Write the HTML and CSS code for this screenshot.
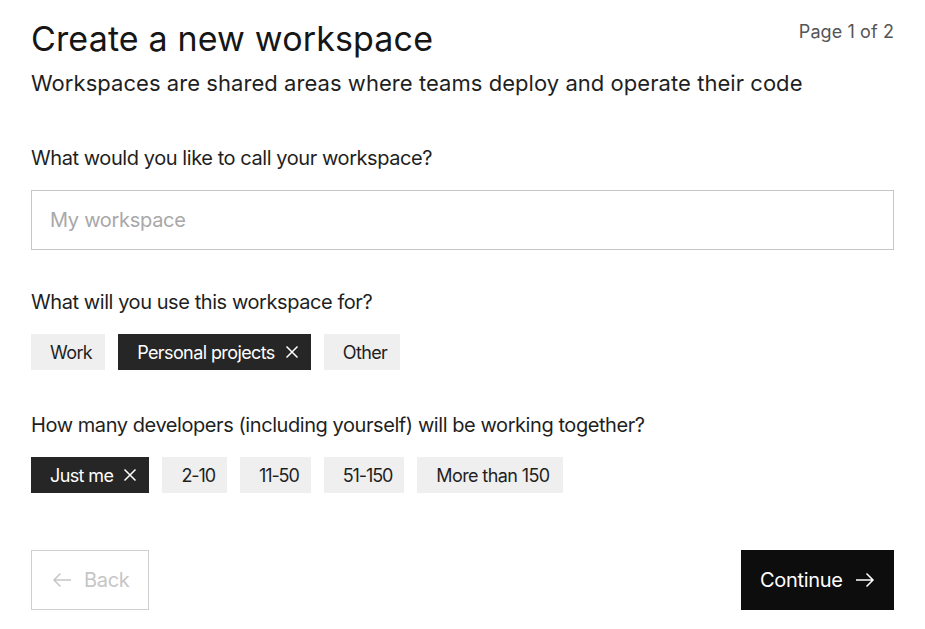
FILE: index.html
```html
<!DOCTYPE html>
<html>
<head>
<meta charset="utf-8">
<link rel="stylesheet" href="styles.css">
</head>
<body>
<main class="page">
  <header class="head">
    <div class="head-text">
      <h1 class="title">Create a new workspace</h1>
      <p class="subtitle">Workspaces are shared areas where teams deploy and operate their code</p>
    </div>
    <div class="pager">Page 1 of 2</div>
  </header>

  <section class="field field-name">
    <label class="label" for="ws">What would you like to call your workspace?</label>
    <input id="ws" class="input" type="text" placeholder="My workspace">
  </section>

  <section class="field field-use">
    <div class="label">What will you use this workspace for?</div>
    <div class="chips">
      <span class="chip">Work</span>
      <span class="chip chip-on">Personal projects <svg class="x" viewBox="0 0 14 14" width="14" height="14"><path d="M1.5 1.5 L12.5 12.5 M12.5 1.5 L1.5 12.5" stroke="currentColor" stroke-width="1.5" fill="none"/></svg></span>
      <span class="chip">Other</span>
    </div>
  </section>

  <section class="field field-team">
    <div class="label">How many developers (including yourself) will be working together?</div>
    <div class="chips">
      <span class="chip chip-on">Just me <svg class="x" viewBox="0 0 14 14" width="14" height="14"><path d="M1.5 1.5 L12.5 12.5 M12.5 1.5 L1.5 12.5" stroke="currentColor" stroke-width="1.5" fill="none"/></svg></span>
      <span class="chip chip-num">2-10</span>
      <span class="chip chip-num">11-50</span>
      <span class="chip chip-num">51-150</span>
      <span class="chip">More than 150</span>
    </div>
  </section>

  <footer class="actions">
    <button class="btn btn-back" type="button"><svg class="arrow" viewBox="0 0 20 16" width="20" height="16"><path d="M19 8 H2 M8.5 1.5 L2 8 L8.5 14.5" stroke="currentColor" stroke-width="1.5" fill="none"/></svg>Back</button>
    <button class="btn btn-next" type="button">Continue<svg class="arrow" viewBox="0 0 20 16" width="20" height="16"><path d="M1 8 H18 M11.5 1.5 L18 8 L11.5 14.5" stroke="currentColor" stroke-width="1.5" fill="none"/></svg></button>
  </footer>
</main>
</body>
</html>
```

FILE: styles.css
```css
* { box-sizing: border-box; }
html, body { margin: 0; padding: 0; background: #fff; }
body {
  font-family: Inter, "Liberation Sans", sans-serif;
  color: #1a1a1a;
}
.page {
  padding: 19px 31px 0 31px;
  display: flex;
  flex-direction: column;
}
.head {
  display: flex;
  justify-content: space-between;
  align-items: flex-start;
}
.head-text {
  flex: 1;
  min-width: 0;
}
.title {
  margin: 0;
  font-size: 34px;
  font-weight: 400;
  line-height: 40px;
  letter-spacing: 0.15px;
  color: #161616;
  white-space: nowrap;
}
.subtitle {
  margin: 10px 0 0 0;
  font-size: 22px;
  line-height: 28px;
  letter-spacing: 0.05px;
  color: #1f1f1f;
  white-space: nowrap;
}
.pager {
  flex-shrink: 0;
  white-space: nowrap;
  font-size: 18px;
  line-height: 24px;
  color: #555;
  letter-spacing: 0.1px;
  padding-top: 1px;
}
.field { display: flex; flex-direction: column; }
.field-name { margin-top: 49px; }
.field-use { margin-top: 40px; }
.field-team { margin-top: 43px; }
.label {
  font-size: 20px;
  line-height: 24px;
  letter-spacing: -0.43px;
  color: #1f1f1f;
}
.input {
  margin-top: 20px;
  height: 60px;
  border: 1px solid #c6c6c6;
  padding: 0 18px;
  font-family: inherit;
  font-size: 20px;
  letter-spacing: -0.3px;
  color: #1f1f1f;
  outline: none;
}
.input::placeholder { color: #a8a8a8; }
.chips {
  margin-top: 20px;
  display: flex;
  gap: 13px;
}
.chip {
  height: 36px;
  display: inline-flex;
  align-items: center;
  gap: 10px;
  padding: 0 13px 0 19px;
  background: #efefef;
  font-size: 18px;
  letter-spacing: -0.6px;
  color: #1f1f1f;
}
.chip-num { letter-spacing: -1.1px; padding-right: 12px; }
.chip-on {
  background: #262626;
  color: #fff;
  padding-right: 12px;
}
.x { display: block; }
.actions {
  margin-top: 57px;
  display: flex;
  justify-content: space-between;
}
.btn {
  height: 60px;
  display: inline-flex;
  align-items: center;
  gap: 12px;
  font-family: inherit;
  font-size: 20px;
  letter-spacing: -0.3px;
  border: 1px solid transparent;
  padding: 0 18px;
  cursor: pointer;
}
.btn-back {
  width: 118px;
  background: #fff;
  border-color: #cfcfcf;
  color: #c6c6c6;
  padding-left: 20px;
}
.btn-next {
  width: 153px;
  background: #0d0d0d;
  color: #fff;
}
.arrow { display: block; }
```
